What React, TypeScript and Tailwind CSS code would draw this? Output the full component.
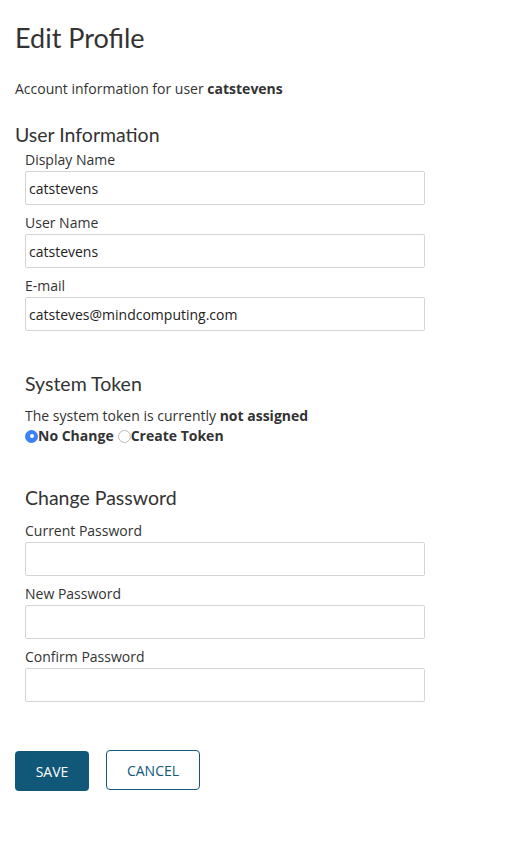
import React from "react";

const font = { fontFamily: '"Open Sans", "Noto Sans", sans-serif' };
const head = { fontFamily: '"Lato", "Open Sans", sans-serif' };

function Field({ label, value }: { label: string; value?: string }) {
  return (
    <div className="mb-[8px]">
      <div className="text-[14px] leading-[20px] text-[#333] mb-[1px]">{label}</div>
      <div className="w-[400px] h-[34px] border border-[#d4d4d4] rounded-[2px] bg-white flex items-center px-[3px] text-[14px] text-[#222]">
        {value}
      </div>
    </div>
  );
}

export default function App() {
  return (
    <div className="bg-white min-h-[845px] w-[530px] pl-[15px] pt-[20px] text-[#333]" style={head}>
      <h1 className="text-[27px] leading-[36px] font-normal text-[#333]">Edit Profile</h1>
      <p className="mt-[23px] text-[14px] leading-[20px]" style={font}>
        Account information for user <b>catstevens</b>
      </p>
      <h2 className="mt-[22px] mb-[1px] text-[19.5px] leading-[28px] font-normal">User Information</h2>
      <div className="pl-[10px]" style={font}>
        <Field label="Display Name" value="catstevens" />
        <Field label="User Name" value="catstevens" />
        <Field label="E-mail" value="catsteves@mindcomputing.com" />

        <h2 className="mt-[39px] text-[19.5px] leading-[28px] font-normal" style={head}>
          System Token
        </h2>
        <p className="mt-[8px] text-[14px] leading-[20px]">
          The system token is currently <b>not assigned</b>
        </p>
        <div className="flex items-center text-[14px] leading-[20px] font-bold">
          <span className="w-[13px] h-[13px] rounded-full bg-[#3b82f6] flex items-center justify-center">
            <span className="w-[4px] h-[4px] rounded-full bg-white" />
          </span>
          <span>No Change</span>
          <span className="ml-[4px] w-[13px] h-[13px] rounded-full border border-[#bbb] bg-white" />
          <span>Create Token</span>
        </div>

        <h2 className="mt-[38px] text-[19.5px] leading-[28px] font-normal" style={head}>
          Change Password
        </h2>
        <div className="mt-[9px]">
          <Field label="Current Password" />
          <Field label="New Password" />
          <Field label="Confirm Password" />
        </div>
      </div>
      <div className="mt-[48px] flex items-start gap-[17px]" style={font}>
        <button className="mt-[1px] w-[74px] h-[40px] rounded-[4px] bg-[#115878] text-white text-[14px]">
          SAVE
        </button>
        <button className="w-[94px] h-[40px] rounded-[4px] border border-[#115878] bg-white text-[#115878] text-[14px]">
          CANCEL
        </button>
      </div>
    </div>
  );
}
